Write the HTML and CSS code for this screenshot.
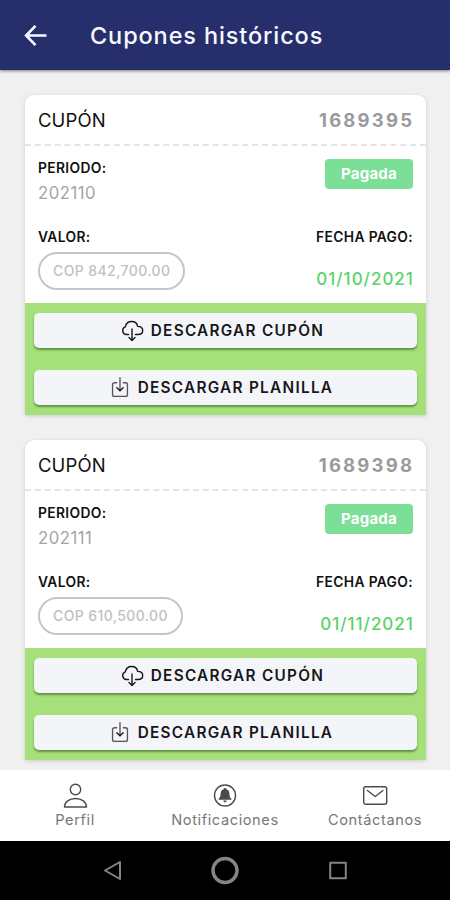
FILE: index.html
```html
<!DOCTYPE html>
<html lang="es">
<head>
  <meta charset="UTF-8">
  <meta name="viewport" content="width=device-width, initial-scale=1.0">
  <title>Cupones históricos</title>
  <link rel="stylesheet" href="styles.css">
</head>
<body>

<!-- Shared icons -->
<svg class="sprite" xmlns="http://www.w3.org/2000/svg">
  <symbol id="icon-cloud" viewBox="0 0 24 22">
    <path d="M8.500 14.500H6a4 4 0 0 1-.7-7.700C6 3.300 8.700 1.500 11.700 1.500c3.200 0 5.400 2 6 4.900 3 .1 5 1.700 5 4.100s-2 4-4.700 4h-2.500M12 9v11.500M9 17.500l3 3 3-3"/>
  </symbol>
  <symbol id="icon-download" viewBox="0 0 18 22">
    <path d="M5.500 6H3.200C2 6 1.200 6.800 1.200 8v10.300c0 1.200.8 2 2 2h11.600c1.200 0 2-.8 2-2V8c0-1.200-.8-2-2-2H12.500M9 .800v13.500"/>
    <path class="tip" d="M5.700 11.200L9 14.400l3.300-3.200"/>
  </symbol>
</svg>

<header class="topbar">
  <svg class="back" viewBox="0 0 24 24"><path d="M23.500 12H2.500M12 2L2.200 12l9.800 10"/></svg>
  <h1>Cupones históricos</h1>
</header>

<main class="coupons">
  <article class="card">
    <div class="card-header">
      <span class="card-title">CUPÓN</span>
      <span class="card-number">1689395</span>
    </div>
    <div class="card-body">
      <div class="row">
        <div>
          <p class="label">PERIODO:</p>
          <p class="period">202110</p>
        </div>
        <span class="badge">Pagada</span>
      </div>
      <div class="row">
        <div>
          <p class="label">VALOR:</p>
          <span class="pill">COP 842,700.00</span>
        </div>
        <div class="right">
          <p class="label">FECHA PAGO:</p>
          <p class="date">01/10/2021</p>
        </div>
      </div>
    </div>
    <div class="card-actions">
      <button><svg class="icon-cloud"><use href="#icon-cloud"/></svg>DESCARGAR CUPÓN</button>
      <button><svg class="icon-download"><use href="#icon-download"/></svg>DESCARGAR PLANILLA</button>
    </div>
  </article>

  <article class="card">
    <div class="card-header">
      <span class="card-title">CUPÓN</span>
      <span class="card-number">1689398</span>
    </div>
    <div class="card-body">
      <div class="row">
        <div>
          <p class="label">PERIODO:</p>
          <p class="period">202111</p>
        </div>
        <span class="badge">Pagada</span>
      </div>
      <div class="row">
        <div>
          <p class="label">VALOR:</p>
          <span class="pill">COP 610,500.00</span>
        </div>
        <div class="right">
          <p class="label">FECHA PAGO:</p>
          <p class="date">01/11/2021</p>
        </div>
      </div>
    </div>
    <div class="card-actions">
      <button><svg class="icon-cloud"><use href="#icon-cloud"/></svg>DESCARGAR CUPÓN</button>
      <button><svg class="icon-download"><use href="#icon-download"/></svg>DESCARGAR PLANILLA</button>
    </div>
  </article>
</main>

<nav class="tabs">
  <a class="tab">
    <svg viewBox="0 0 26 26"><circle cx="13.500" cy="6.500" r="5.200"/><path d="M2.500 24c0-5 4.800-8.500 11-8.500s11 3.500 11 8.500z"/></svg>
    <span>Perfil</span>
  </a>
  <a class="tab">
    <svg viewBox="0 0 26 26"><circle cx="13" cy="12.500" r="10.500"/><path class="solid" d="M13 5c.8 0 1.300.5 1.400 1.200 2 .6 3 2.200 3 4.500 0 2.600.7 3.900 2.100 5.300v.7h-13V16c1.400-1.400 2.100-2.700 2.100-5.300 0-2.300 1-3.900 3-4.500.1-.7.600-1.200 1.400-1.200zM11.300 17.500h3.400c-.1 1.100-.8 1.800-1.700 1.800s-1.600-.7-1.700-1.800z"/></svg>
    <span>Notificaciones</span>
  </a>
  <a class="tab">
    <svg viewBox="0 0 26 26"><rect x="1.700" y="3.700" width="23" height="17.600" rx="2"/><path d="M5.500 7.500l7.700 6 7.700-6"/></svg>
    <span>Contáctanos</span>
  </a>
</nav>

<footer class="system-bar">
  <svg viewBox="0 0 30 30"><path d="M23 6v17L8 14.500z"/></svg>
  <svg viewBox="0 0 30 30"><circle class="ring" cx="15" cy="14.500" r="12"/></svg>
  <svg viewBox="0 0 30 30"><rect x="7.200" y="6.700" width="15.600" height="15.600"/></svg>
</footer>

</body>
</html>
```

FILE: styles.css
```css
* {
  box-sizing: border-box;
}

body {
  margin: 0;
  height: 900px;
  display: flex;
  flex-direction: column;
  overflow: hidden;
  background-color: #f0f0f0;
  color: #111;
  font-family: Inter, "Open Sans", sans-serif;
}

h1, p {
  margin: 0;
}

svg {
  fill: none;
  stroke: currentColor;
  stroke-linecap: round;
  stroke-linejoin: round;
}

.sprite {
  display: none;
}

.topbar {
  flex: none;
  display: flex;
  align-items: center;
  height: 70px;
  padding: 0 24px;
  background-color: #262f6b;
  color: #f7f8ff;
  box-shadow: 0 1px 3px rgba(0, 0, 0, 0.5);
}

.topbar h1 {
  margin-left: 43px;
  font-size: 23.5px;
  font-weight: 500;
  letter-spacing: 0.88px;
}

.back {
  width: 23px;
  height: 23px;
  stroke-width: 2.8;
  stroke-linecap: butt;
  stroke-linejoin: miter;
}

.coupons {
  flex: none;
  display: flex;
  flex-direction: column;
  gap: 25px;
  height: 700px;
  padding: 25px 24px 0 25px;
}

.card {
  flex: none;
  height: 320px;
  background-color: #fff;
  border-radius: 9px 9px 0 0;
  box-shadow: 0 1px 4px rgba(0, 0, 0, 0.15);
}

.card-header {
  display: flex;
  justify-content: space-between;
  align-items: center;
  height: 51px;
  padding: 0 13px;
  border-bottom: 2px dashed #e4e4e4;
}

.card-title {
  font-size: 18.5px;
  letter-spacing: 0.1px;
}

.card-number {
  color: #999b9e;
  font-size: 18.5px;
  font-weight: 700;
  letter-spacing: 2.2px;
  margin-right: -1.2px;
}

.card-body {
  display: flex;
  flex-direction: column;
  gap: 26px;
  height: 157px;
  padding: 13px 13px 0;
}

.row {
  display: flex;
  justify-content: space-between;
  align-items: flex-start;
}

.label {
  font-size: 13.8px;
  font-weight: 600;
  line-height: 18px;
  letter-spacing: 0.35px;
}

.period {
  margin-top: 7px;
  color: #a4a4a8;
  font-size: 16.7px;
  line-height: 18px;
  letter-spacing: 0.5px;
}

.badge {
  width: 88px;
  height: 30px;
  border-radius: 4px;
  background-color: #7bdf98;
  color: #fff;
  font-size: 15px;
  font-weight: 700;
  line-height: 30px;
  letter-spacing: 0.2px;
  text-align: center;
}

.pill {
  display: block;
  height: 38px;
  margin-top: 6px;
  padding: 0 13px;
  border: 2px solid #c5c6c8;
  border-radius: 19px;
  color: #bfc0c4;
  font-size: 14px;
  font-weight: 500;
  line-height: 34px;
  letter-spacing: 0.4px;
}

.right {
  text-align: right;
}

.date {
  margin-top: 22px;
  margin-right: -0.9px;
  color: #5bd368;
  font-size: 17px;
  font-weight: 500;
  line-height: 22px;
  letter-spacing: 1px;
}

.card-actions {
  display: flex;
  flex-direction: column;
  gap: 22px;
  padding: 10px 9px;
  background-color: #a5e07a;
}

.card-actions button {
  display: flex;
  justify-content: center;
  align-items: center;
  height: 35px;
  padding: 0 7px 0 0;
  border: none;
  border-radius: 5px;
  background-color: #f4f5f9;
  color: #17171b;
  box-shadow: 0 2px 2px rgba(30, 70, 10, 0.5);
  font-family: inherit;
  font-size: 15.3px;
  font-weight: 600;
  letter-spacing: 1.3px;
}

.icon-cloud {
  width: 24px;
  height: 22px;
  margin-right: 7px;
  stroke-width: 1.4;
}

.icon-download {
  width: 18px;
  height: 21px;
  margin-right: 9px;
  stroke: #55555a;
  stroke-width: 1.4;
}

.tip {
  stroke: #17171b;
}

.tabs {
  flex: none;
  display: grid;
  grid-template-columns: repeat(3, 1fr);
  height: 71px;
  background-color: #fff;
}

.tab {
  display: flex;
  flex-direction: column;
  align-items: center;
  padding-top: 13px;
  color: #4b4b4d;
}

.tab svg {
  width: 26px;
  height: 26px;
  stroke-width: 1.4;
}

.tab .solid {
  fill: currentColor;
  stroke: none;
}

.tab span {
  margin-top: 2px;
  color: #77777a;
  font-size: 14.6px;
  line-height: 18px;
  letter-spacing: 0.6px;
}

.system-bar {
  flex: 1;
  display: flex;
  justify-content: center;
  align-items: center;
  gap: 83px;
  background-color: #000;
  color: #858585;
}

.system-bar svg {
  width: 30px;
  height: 30px;
  stroke-width: 2;
}

.system-bar .ring {
  stroke-width: 3.4;
}
```
